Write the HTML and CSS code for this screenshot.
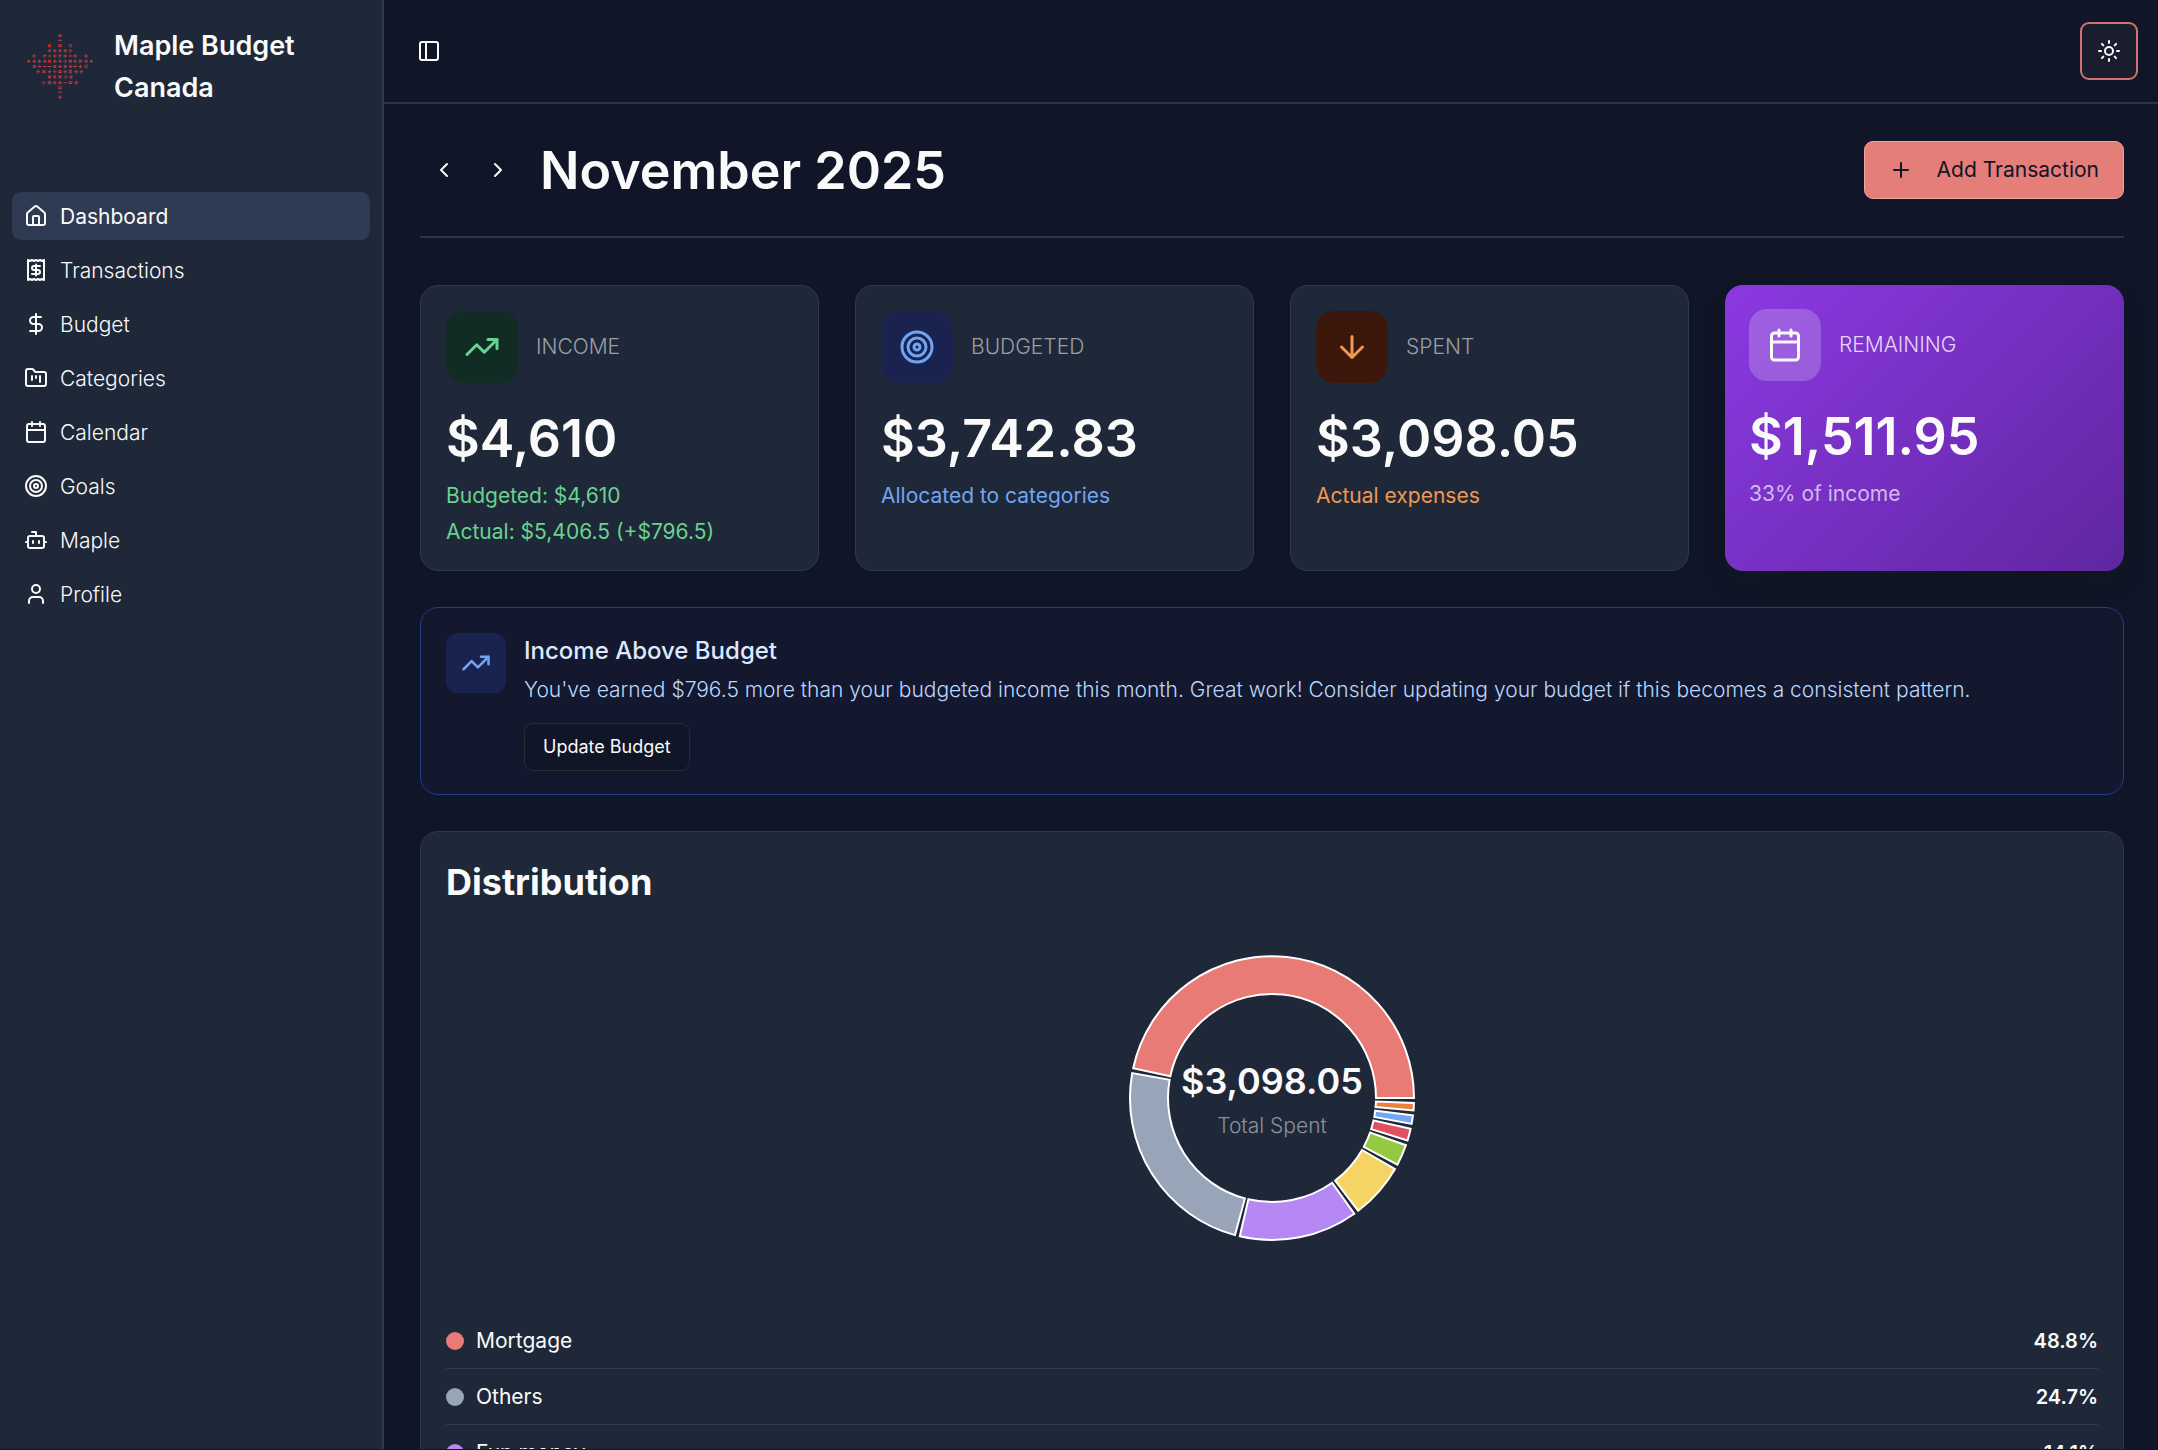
FILE: index.html
```html
<!DOCTYPE html>
<html lang="en">
<head>
<meta charset="utf-8">
<meta name="viewport" content="width=device-width, initial-scale=1">
<title>Maple Budget Canada</title>
<link rel="stylesheet" href="styles.css">
</head>
<body>
<svg width="0" height="0" class="sprite" aria-hidden="true">
  <defs>
    <path id="plus" d="M-3.5 0h7M0-3.5v7"/>
    <path id="times" d="M-2.8-2.8l5.6 5.6M2.8-2.8l-5.6 5.6"/>
    <path id="minus" d="M-3.5 0h7"/>
    <path id="equals" d="M-3.5-1.6h7M-3.5 1.6h7"/>
    <path id="divide" d="M-3.5 0h7M0-3.6v1.4M0 2.2v1.4"/>
    <path id="percent" d="M2.8-3l-5.6 6M-3-2.4h2M1 2.4h2"/>
    <symbol id="i-trend" viewBox="0 0 24 24"><path d="M16 7h6v6"/><path d="m22 7-8.500 8.500-5-5L2 17"/></symbol>
    <symbol id="i-target" viewBox="0 0 24 24"><circle cx="12" cy="12" r="10"/><circle cx="12" cy="12" r="6"/><circle cx="12" cy="12" r="2"/></symbol>
    <symbol id="i-calendar" viewBox="0 0 24 24"><path d="M8 2v4M16 2v4"/><rect width="18" height="18" x="3" y="4" rx="2"/><path d="M3 10h18"/></symbol>
  </defs>
</svg>
<div class="app">
  <aside class="sidebar">
    <div class="brand">
      <svg class="logo" viewBox="0 0 130 130" role="img" aria-label="Maple leaf">
        <use href="#plus" x="65" y="5"/><use href="#minus" x="65" y="14"/>
        <use href="#times" x="45" y="24"/><use href="#equals" x="65" y="24"/><use href="#percent" x="85" y="24"/>
        <use href="#plus" x="45" y="34"/><use href="#times" x="55" y="34"/><use href="#plus" x="65" y="34"/><use href="#times" x="75" y="34"/><use href="#divide" x="85" y="34"/>
        <use href="#plus" x="15" y="44"/><use href="#times" x="36" y="44"/><use href="#minus" x="45" y="44"/><use href="#plus" x="55" y="44"/><use href="#times" x="65" y="44"/><use href="#plus" x="75" y="44"/><use href="#minus" x="85" y="44"/><use href="#plus" x="94" y="44"/><use href="#plus" x="115" y="44"/>
        <use href="#plus" x="5" y="54"/><use href="#plus" x="16" y="54"/><use href="#plus" x="26" y="54"/><use href="#plus" x="36" y="54"/><use href="#times" x="45" y="54"/><use href="#plus" x="55" y="54"/><use href="#plus" x="65" y="54"/><use href="#divide" x="75" y="54"/><use href="#times" x="85" y="54"/><use href="#plus" x="94" y="54"/><use href="#times" x="104" y="54"/><use href="#plus" x="115" y="54"/><use href="#plus" x="125" y="54"/>
        <use href="#times" x="16" y="64"/><use href="#divide" x="26" y="64"/><use href="#minus" x="36" y="64"/><use href="#minus" x="45" y="64"/><use href="#times" x="55" y="64"/><use href="#plus" x="65" y="64"/><use href="#times" x="75" y="64"/><use href="#plus" x="85" y="64"/><use href="#divide" x="94" y="64"/><use href="#plus" x="104" y="64"/><use href="#percent" x="115" y="64"/>
        <use href="#plus" x="23" y="74"/><use href="#times" x="34" y="74"/><use href="#plus" x="45" y="74"/><use href="#divide" x="55" y="74"/><use href="#equals" x="65" y="74"/><use href="#plus" x="75" y="74"/><use href="#times" x="85" y="74"/><use href="#plus" x="96" y="74"/><use href="#plus" x="106" y="74"/>
        <use href="#times" x="45" y="84"/><use href="#plus" x="55" y="84"/><use href="#times" x="65" y="84"/><use href="#divide" x="76" y="84"/><use href="#plus" x="86" y="84"/>
        <use href="#divide" x="34" y="95"/><use href="#equals" x="45" y="95"/><use href="#plus" x="55" y="95"/><use href="#plus" x="65" y="95"/><use href="#minus" x="75" y="95"/><use href="#equals" x="85" y="95"/><use href="#plus" x="96" y="95"/>
        <use href="#equals" x="65" y="105"/><use href="#minus" x="65" y="113"/><use href="#plus" x="65" y="123"/>
      </svg>
      <span class="brand-name">Maple Budget Canada</span>
    </div>
    <nav class="nav" aria-label="Main">
      <a class="nav-item active" href="#dashboard" aria-current="page">
        <svg class="icon" viewBox="0 0 24 24"><path d="M15 21v-8a1 1 0 0 0-1-1h-4a1 1 0 0 0-1 1v8"/><path d="M3 10a2 2 0 0 1 .709-1.528l7-6a2 2 0 0 1 2.582 0l7 6A2 2 0 0 1 21 10v9a2 2 0 0 1-2 2H5a2 2 0 0 1-2-2z"/></svg><span>Dashboard</span></a>
      <a class="nav-item" href="#transactions">
        <svg class="icon" viewBox="0 0 24 24"><path d="M4 2v20l2-1 2 1 2-1 2 1 2-1 2 1 2-1 2 1V2l-2 1-2-1-2 1-2-1-2 1-2-1-2 1Z"/><path d="M16 8h-6a2 2 0 1 0 0 4h4a2 2 0 1 1 0 4H8"/><path d="M12 17.500v-11"/></svg><span>Transactions</span></a>
      <a class="nav-item" href="#budget">
        <svg class="icon" viewBox="0 0 24 24"><path d="M12 2v20"/><path d="M17 5H9.500a3.500 3.500 0 0 0 0 7h5a3.500 3.500 0 0 1 0 7H6"/></svg><span>Budget</span></a>
      <a class="nav-item" href="#categories">
        <svg class="icon" viewBox="0 0 24 24"><path d="M4 20h16a2 2 0 0 0 2-2V8a2 2 0 0 0-2-2h-7.930a2 2 0 0 1-1.660-.900l-.820-1.200A2 2 0 0 0 7.930 3H4a2 2 0 0 0-2 2v13c0 1.100.900 2 2 2Z"/><path d="M8 10v4M12 10v2M16 10v6"/></svg><span>Categories</span></a>
      <a class="nav-item" href="#calendar"><svg class="icon"><use href="#i-calendar"/></svg><span>Calendar</span></a>
      <a class="nav-item" href="#goals"><svg class="icon"><use href="#i-target"/></svg><span>Goals</span></a>
      <a class="nav-item" href="#maple">
        <svg class="icon" viewBox="0 0 24 24"><path d="M12 8V4H8"/><rect width="16" height="12" x="4" y="8" rx="2"/><path d="M2 14h2M20 14h2M15 13v2M9 13v2"/></svg><span>Maple</span></a>
      <a class="nav-item" href="#profile">
        <svg class="icon" viewBox="0 0 24 24"><path d="M19 21v-2a4 4 0 0 0-4-4H9a4 4 0 0 0-4 4v2"/><circle cx="12" cy="7" r="4"/></svg><span>Profile</span></a>
    </nav>
  </aside>

  <div class="main">
    <header class="topbar">
      <button class="icon-btn" type="button" aria-label="Toggle sidebar">
        <svg class="icon" viewBox="0 0 24 24"><rect width="18" height="18" x="3" y="3" rx="2"/><path d="M9 3v18"/></svg>
      </button>
      <button class="theme-btn" type="button" aria-label="Toggle theme">
        <svg class="icon" viewBox="0 0 24 24"><circle cx="12" cy="12" r="4"/><path d="M12 2v2M12 20v2M4.930 4.930l1.410 1.410M17.660 17.660l1.410 1.410M2 12h2M20 12h2M6.340 17.660l-1.410 1.410M19.070 4.930l-1.410 1.410"/></svg>
      </button>
    </header>

    <main class="content">
      <div class="page-head">
        <div class="month">
          <button class="icon-btn" type="button" aria-label="Previous month"><svg class="icon" viewBox="0 0 24 24"><path d="m15 18-6-6 6-6"/></svg></button>
          <button class="icon-btn" type="button" aria-label="Next month"><svg class="icon" viewBox="0 0 24 24"><path d="m9 18 6-6-6-6"/></svg></button>
          <h1>November 2025</h1>
        </div>
        <button class="add-btn" type="button">
          <svg class="icon" viewBox="0 0 24 24"><path d="M5 12h14M12 5v14"/></svg>Add Transaction</button>
      </div>

      <section class="stats">
        <article class="card stat green">
          <div class="stat-head"><span class="tile"><svg class="icon"><use href="#i-trend"/></svg></span><h2>INCOME</h2></div>
          <p class="amount">$4,610</p>
          <p class="note">Budgeted: $4,610</p>
          <p class="note">Actual: $5,406.5 (+$796.5)</p>
        </article>
        <article class="card stat blue">
          <div class="stat-head"><span class="tile"><svg class="icon"><use href="#i-target"/></svg></span><h2>BUDGETED</h2></div>
          <p class="amount">$3,742.83</p>
          <p class="note">Allocated to categories</p>
        </article>
        <article class="card stat orange">
          <div class="stat-head"><span class="tile"><svg class="icon" viewBox="0 0 24 24"><path d="M12 5v14M19 12l-7 7-7-7"/></svg></span><h2>SPENT</h2></div>
          <p class="amount">$3,098.05</p>
          <p class="note">Actual expenses</p>
        </article>
        <article class="card stat purple">
          <div class="stat-head"><span class="tile"><svg class="icon"><use href="#i-calendar"/></svg></span><h2>REMAINING</h2></div>
          <p class="amount">$1,511.95</p>
          <p class="note">33% of income</p>
        </article>
      </section>

      <section class="alert">
        <span class="tile small"><svg class="icon"><use href="#i-trend"/></svg></span>
        <div class="alert-body">
          <h3>Income Above Budget</h3>
          <p>You've earned $796.5 more than your budgeted income this month. Great work! Consider updating your budget if this becomes a consistent pattern.</p>
          <button class="outline-btn" type="button">Update Budget</button>
        </div>
      </section>

      <section class="card distribution">
        <h2>Distribution</h2>
        <div class="chart">
          <svg class="donut" viewBox="-144 -144 288 288" role="img" aria-label="Spending by category">
            <path fill="#e97b76" d="M142 0A142 142 0 0 0-138.800-29.800L-101.700-21.800A104 104 0 0 1 104 0Z"/>
            <path fill="#98a4b8" d="M-139.800-24.900A142 142 0 0 0-37 137.100L-27.100 100.400A104 104 0 0 1-102.400-18.200Z"/>
            <path fill="#b688f4" d="M-32.200 138.300A142 142 0 0 0 82.300 115.700L60.200 84.800A104 104 0 0 1-23.600 101.300Z"/>
            <path fill="#f6d365" d="M86.200 112.800A142 142 0 0 0 123 71L90.100 52A104 104 0 0 1 63.200 82.600Z"/>
            <path fill="#94ca42" d="M125.400 66.700A142 142 0 0 0 133.900 47.200L98.100 34.500A104 104 0 0 1 91.800 48.800Z"/>
            <path fill="#e14f62" d="M135.500 42.500A142 142 0 0 0 138.600 30.700L101.500 22.500A104 104 0 0 1 99.200 31.100Z"/>
            <path fill="#73a7f6" d="M139.600 25.900A142 142 0 0 0 140.900 17.300L103.200 12.700A104 104 0 0 1 102.300 18.900Z"/>
            <path fill="#ec8038" d="M141.500 12.400A142 142 0 0 0 141.900 5L103.900 3.600A104 104 0 0 1 103.600 9.100Z"/>
          </svg>
          <div class="chart-label"><strong>$3,098.05</strong><span>Total Spent</span></div>
        </div>
        <ul class="legend">
          <li><span class="dot mortgage"></span><span>Mortgage</span><b>48.8%</b></li>
          <li><span class="dot others"></span><span>Others</span><b>24.7%</b></li>
          <li><span class="dot fun"></span><span>Fun money</span><b>14.1%</b></li>
        </ul>
      </section>
    </main>
  </div>
</div>
</body>
</html>
```
FILE: styles.css
```css
:root {
  --bg: #101527;
  --surface: #1f2838;
  --line: #2d3a52;
  --text: #fafafa;
  --muted: #9a9ea8;
  --coral: #e57d79;
}

* { box-sizing: border-box; }

body {
  margin: 0;
  background: var(--bg);
  color: var(--text);
  font-family: Inter, "Liberation Sans", sans-serif;
  font-size: 21px;
  line-height: 36px;
}

h1, h2, h3, p, ul { margin: 0; padding: 0; }
button { font: inherit; color: inherit; cursor: pointer; }
.sprite { position: absolute; }

.icon {
  width: 24px;
  height: 24px;
  flex: none;
  fill: none;
  stroke: currentColor;
  stroke-width: 2;
  stroke-linecap: round;
  stroke-linejoin: round;
}

.app {
  display: flex;
  height: 100vh;
  overflow: hidden;
  border-bottom: 1px solid var(--bg);
}

/* Sidebar */
.sidebar {
  width: 384px;
  flex: none;
  padding: 24px 12px;
  background: var(--surface);
  border-right: 2px solid var(--line);
}

.brand {
  display: flex;
  gap: 20px;
  padding: 0 14px;
  margin-bottom: 83px;
}

.logo {
  width: 68px;
  height: 68px;
  margin-top: 9px;
  flex: none;
  fill: none;
  stroke: #c2383d;
  stroke-width: 2;
}

.brand-name {
  padding-top: 1px;
  font-size: 27px;
  font-weight: 600;
  line-height: 42px;
}

.nav { display: flex; flex-direction: column; gap: 6px; }

.nav-item {
  display: flex;
  align-items: center;
  gap: 12px;
  height: 48px;
  padding: 0 12px;
  border-radius: 9px;
  color: var(--text);
  font-weight: 300;
  text-decoration: none;
}

.nav-item span { padding-top: 2px; }
.nav-item.active { background: #2f3a53; font-weight: 400; }

/* Top bar */
.main { flex: 1; min-width: 0; }

.topbar {
  display: flex;
  align-items: center;
  justify-content: space-between;
  height: 104px;
  padding: 0 20px 0 21px;
  border-bottom: 2px solid #28344a;
}

.icon-btn {
  display: grid;
  place-items: center;
  width: 48px;
  height: 48px;
  padding: 0;
  border: 0;
  background: none;
}

.theme-btn {
  display: grid;
  place-items: center;
  width: 58px;
  height: 58px;
  padding: 0;
  border: 2px solid #cf7270;
  border-radius: 9px;
  background: #1a1d2e;
}

/* Page */
.content {
  display: flex;
  flex-direction: column;
  gap: 36px;
  padding: 0 34px 0 36px;
}

.page-head {
  display: flex;
  align-items: center;
  justify-content: space-between;
  height: 134px;
  margin-bottom: 11px;
  border-bottom: 2px solid #28344a;
}

.month { display: flex; align-items: center; gap: 6px; }

h1 {
  margin-left: 12px;
  padding-top: 2px;
  font-size: 52px;
  font-weight: 600;
  line-height: 60px;
}

.add-btn {
  display: flex;
  align-items: center;
  gap: 24px;
  height: 58px;
  padding: 0 24px;
  border: 1px solid #efa5a3;
  border-radius: 9px;
  background: var(--coral);
  color: #101527;
}

.card {
  border: 1px solid var(--line);
  border-radius: 18px;
  background: var(--surface);
}

.stats {
  display: grid;
  grid-template-columns: repeat(4, 1fr);
  gap: 36px;
}

.stat { padding: 25px 25px 20px; }
.stat-head { display: flex; align-items: center; gap: 18px; }

.stat h2 {
  color: var(--muted);
  font-size: 21px;
  font-weight: 300;
}

.tile {
  display: grid;
  place-items: center;
  width: 72px;
  height: 72px;
  flex: none;
  border-radius: 18px;
}

.tile .icon { width: 36px; height: 36px; }

.amount {
  margin: 26px 0 9px;
  font-size: 52px;
  font-weight: 600;
  line-height: 60px;
}

.green .tile { background: #112b25; color: #68d391; }
.green .note { color: #68d391; }
.blue .tile { background: #1a234f; color: #70a5f5; }
.blue .note { color: #70a5f5; }
.orange .tile { background: #3c180c; color: #ef9850; }
.orange .note { color: #ef9850; }

.purple {
  padding: 24px;
  border: 0;
  background: linear-gradient(135deg, #8b39e2, #6026a0);
  box-shadow: 0 15px 22px -4px rgba(16, 24, 32, 0.9);
}

.purple .tile { background: rgba(255, 255, 255, 0.2); }
.purple h2 { color: #e5d5f6; font-weight: 300; }
.purple .note { color: #d3b9ee; }

/* Notice */
.alert {
  display: flex;
  gap: 18px;
  padding: 25px 25px 23px;
  border: 1px solid #243c8c;
  border-radius: 18px;
  background: #13182f;
}

.tile.small {
  width: 60px;
  height: 60px;
  border-radius: 12px;
  background: #1a234f;
  color: #70a5f5;
}

.tile.small .icon { width: 30px; height: 30px; }

.alert h3 {
  color: #dbe8fd;
  font-size: 24px;
  font-weight: 500;
}

.alert p {
  margin: 3px 0 15px;
  color: #bcd6fb;
  font-weight: 300;
}

.outline-btn {
  display: block;
  height: 48px;
  padding: 0 18px;
  border: 1px solid #282b36;
  border-radius: 9px;
  background: var(--bg);
  font-size: 18px;
  line-height: 24px;
}

/* Distribution */
.distribution { padding: 25px; }

.distribution h2 {
  font-size: 36px;
  font-weight: 700;
  line-height: 50px;
}

.chart {
  display: grid;
  place-items: center;
  height: 382px;
}

.chart > * { grid-area: 1 / 1; }

.donut {
  width: 288px;
  height: 288px;
  stroke: #fff;
  stroke-width: 2;
}

.chart-label {
  display: flex;
  flex-direction: column;
  align-items: center;
  gap: 3px;
  padding-top: 4px;
}

.chart-label strong {
  font-size: 36px;
  font-weight: 600;
  line-height: 48px;
}

.chart-label span { color: #8c909b; font-weight: 300; }

.legend {
  margin-top: 24px;
  list-style: none;
}

.legend li {
  display: flex;
  align-items: center;
  gap: 12px;
  height: 56px;
  border-bottom: 1px solid var(--line);
}

.legend b { margin-left: auto; font-size: 20px; font-weight: 600; }

.dot { width: 18px; height: 18px; border-radius: 50%; }
.mortgage { background: #e97b76; }
.others { background: #98a4b8; }
.fun { background: #b688f4; }
```
